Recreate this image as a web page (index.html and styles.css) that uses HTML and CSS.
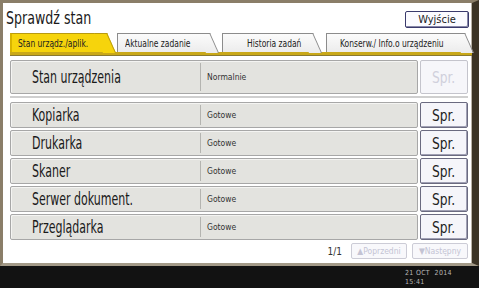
FILE: index.html
```html
<!DOCTYPE html>
<html lang="pl">
<head>
  <meta charset="UTF-8">
  <meta name="viewport" content="width=device-width, initial-scale=1.0">
  <title>Sprawdź stan</title>
  <link rel="stylesheet" href="styles.css">
</head>
<body>
  <div class="panel">
    <div class="header">
      <h1><span class="sq">Sprawdź stan</span></h1>
      <button class="exit">Wyjście</button>
    </div>
    <div class="tabs">
      <div class="tab active"><span class="sq">Stan urządz./aplik.</span></div>
      <div class="tab t2"><span class="sq">Aktualne zadanie</span></div>
      <div class="tab t3"><span class="sq">Historia zadań</span></div>
      <div class="tab t4"><span class="sq">Konserw./ Info.o urządzeniu</span></div>
    </div>
    <div class="content">
      <div class="row main">
        <div class="box">
          <div class="label"><span class="sq">Stan urządzenia</span></div>
          <div class="status">Normalnie</div>
        </div>
        <button class="spr" disabled><span class="sq">Spr.</span></button>
      </div>
      <div class="sep"></div>
      <div class="row">
        <div class="box">
          <div class="label"><span class="sq">Kopiarka</span></div>
          <div class="status">Gotowe</div>
        </div>
        <button class="spr"><span class="sq">Spr.</span></button>
      </div>
      <div class="row">
        <div class="box">
          <div class="label"><span class="sq">Drukarka</span></div>
          <div class="status">Gotowe</div>
        </div>
        <button class="spr"><span class="sq">Spr.</span></button>
      </div>
      <div class="row">
        <div class="box">
          <div class="label"><span class="sq">Skaner</span></div>
          <div class="status">Gotowe</div>
        </div>
        <button class="spr"><span class="sq">Spr.</span></button>
      </div>
      <div class="row">
        <div class="box">
          <div class="label"><span class="sq">Serwer dokument.</span></div>
          <div class="status">Gotowe</div>
        </div>
        <button class="spr"><span class="sq">Spr.</span></button>
      </div>
      <div class="row">
        <div class="box">
          <div class="label"><span class="sq">Przeglądarka</span></div>
          <div class="status">Gotowe</div>
        </div>
        <button class="spr"><span class="sq">Spr.</span></button>
      </div>
      <div class="pager">
        <span class="page">1/1</span>
        <button class="nav" disabled>▲Poprzedni</button>
        <button class="nav" disabled>▼Następny</button>
      </div>
    </div>
  </div>
  <div class="statusbar">
    <div class="clock">21 OCT &nbsp;2014<br>15:41</div>
  </div>
</body>
</html>
```

FILE: styles.css
```css
body {
  margin: 0;
  width: 479px;
  height: 288px;
  overflow: hidden;
  background-color: #121212;
  font-family: "DejaVu Sans Condensed", "Liberation Sans", sans-serif;
  color: #1a1a1a;
}
/* the panel font is narrower than anything installed */
.sq {
  display: inline-block;
  white-space: nowrap;
  transform-origin: left center;
}
.panel {
  box-sizing: border-box;
  width: 479px;
  height: 266px;
  background: #fff;
  border-top: 3px solid #8a7e68;
  border-left: 3px solid #8a7e68;
  border-right: 7px solid #3b3325;
  border-bottom: 3px solid #a39a88;
  box-shadow: inset -1px 0 0 #b8b2a6;
}
.header {
  display: flex;
  justify-content: space-between;
  align-items: center;
  height: 29px;
  padding: 0 3px 0 3px;
}
.header h1 {
  margin: 0;
  font-weight: normal;
  font-size: 18px;
}
.header h1 .sq {
  transform: scaleX(0.78);
}
.exit {
  width: 64px;
  height: 17px;
  margin-top: 4px;
  padding: 0;
  background: #fbfbff;
  border: 1px solid #3a3a6c;
  border-radius: 2px;
  box-shadow: inset -1px -1px 0 #8888a8;
  font-family: inherit;
  font-size: 11px;
  color: #222;
}
.tabs {
  display: flex;
  height: 19px;
  margin: 1px 0 0 7px;
  border-bottom: 3px solid #c9a818;
  box-shadow: 0 1px 0 #8a7a30;
}
.tab {
  position: relative;
  box-sizing: border-box;
  height: 19px;
  padding: 3px 0 0 6px;
  background: linear-gradient(#fbfbfb, #ececec);
  border-left: 1px solid #8c8c8c;
  border-top: 1px solid #8c8c8c;
  font-size: 10.5px;
  color: #222;
}
.tab .sq {
  transform: scaleX(0.8);
}
.tab::after {
  content: "";
  position: absolute;
  top: -1px;
  right: -10px;
  width: 12px;
  height: 19px;
  background: inherit;
  border-top: 1px solid #8c8c8c;
  border-right: 1px solid #8c8c8c;
  transform: skewX(24deg);
  transform-origin: bottom left;
}
.tab.active {
  width: 96px;
  background: #f6d40c;
  border-left: 2px solid #d8b400;
  border-top-color: #b89a10;
  z-index: 2;
}
.tab.active::after {
  background: #f6d40c;
  border-color: #b89a10;
}
.tab.t2 {
  width: 92px;
  margin-left: 11px;
  padding-left: 7px;
}
.tab.t3 {
  width: 90px;
  margin-left: 13px;
  padding-left: 24px;
}
.tab.t4 {
  width: 138px;
  margin-left: 14px;
  padding-left: 13px;
}
.content {
  padding: 5px 4px 0 7px;
}
.row {
  display: flex;
  height: 26px;
  margin-bottom: 2px;
}
.row.main {
  height: 34px;
}
.box {
  display: flex;
  box-sizing: border-box;
  width: 408px;
  background: #e3e3df;
  border: 1px solid #a7a7a7;
  border-radius: 2px;
  box-shadow: inset 1px 1px 0 #f4f4f2;
}
.label {
  display: flex;
  align-items: center;
  box-sizing: border-box;
  width: 190px;
  margin: 2px 0;
  padding: 0 0 1px 21px;
  border-right: 1px solid #b4b4b0;
  font-size: 18px;
}
.label .sq {
  transform: scaleX(0.68);
}
.status {
  padding: 7px 0 0 6px;
  font-size: 8.5px;
  color: #333;
}
.row.main .status {
  padding-top: 11px;
}
.spr {
  box-sizing: border-box;
  width: 48px;
  margin-left: 2px;
  padding: 0;
  background: #f5f5fa;
  border: 1px solid #6a6a80;
  border-radius: 2px;
  box-shadow: inset -1px -1px 0 #a0a0b4;
  font-family: inherit;
  font-size: 16px;
  color: #222;
}
.spr .sq {
  transform: scaleX(0.85);
  transform-origin: center;
}
.spr:disabled {
  background: #f6f6fa;
  border-color: #c4c4cc;
  box-shadow: none;
  color: #d0d0dc;
}
.sep {
  height: 2px;
  margin: 2px 0 4px;
  background: #cfcfcf;
}
.pager {
  display: flex;
  justify-content: flex-end;
  align-items: center;
  gap: 5px;
  height: 18px;
}
.page {
  font-size: 10px;
  margin-right: 4px;
  color: #333;
}
.nav {
  width: 56px;
  height: 16px;
  padding: 0;
  background: #f8f8fb;
  border: 1px solid #ccccd6;
  border-radius: 2px;
  font-family: inherit;
  font-size: 8.5px;
  color: #c4c4d4;
}
.statusbar {
  height: 22px;
}
.clock {
  padding: 3px 0 0 405px;
  font-size: 7px;
  line-height: 9px;
  letter-spacing: 0.3px;
  color: #b8b8b8;
}
```
